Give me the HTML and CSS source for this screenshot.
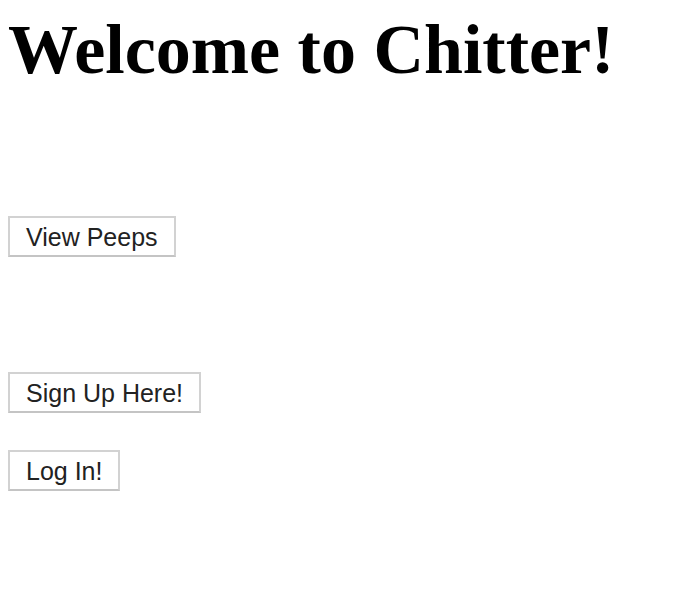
FILE: index.html
```html
<!DOCTYPE html>
<html>
<head>
<meta charset="utf-8">
<title>Chitter</title>
<link rel="stylesheet" href="styles.css">
</head>
<body>
<h1 class="title">Welcome to Chitter!</h1>
<form class="block block-peeps"><button class="btn" type="button">View Peeps</button></form>
<form class="block block-signup"><button class="btn" type="button">Sign Up Here!</button></form>
<form class="block block-login"><button class="btn" type="button">Log In!</button></form>
</body>
</html>
```
FILE: styles.css
```css
html, body { background: #fff; }
body {
  margin: 0;
  padding: 10px 8px 0;
  display: flex;
  flex-direction: column;
  align-items: flex-start;
}
.title {
  margin: 0;
  font-family: "Liberation Serif", "Times New Roman", serif;
  font-weight: bold;
  font-size: 70px;
  line-height: 80px;
  color: #000;
}
.block { margin: 0; display: flex; }
.block-peeps { margin-top: 126px; }
.block-signup { margin-top: 115px; }
.block-login { margin-top: 37px; }
.btn {
  box-sizing: border-box;
  height: 41px;
  padding: 1px 16px 0;
  margin: 0;
  background: #fff;
  border: 2px solid #d2d2d2;
  border-bottom-color: #c4c4c4;
  border-radius: 0;
  font-family: "Liberation Sans", Arial, sans-serif;
  font-size: 25px;
  color: #222;
  display: inline-flex;
  align-items: center;
}
```
